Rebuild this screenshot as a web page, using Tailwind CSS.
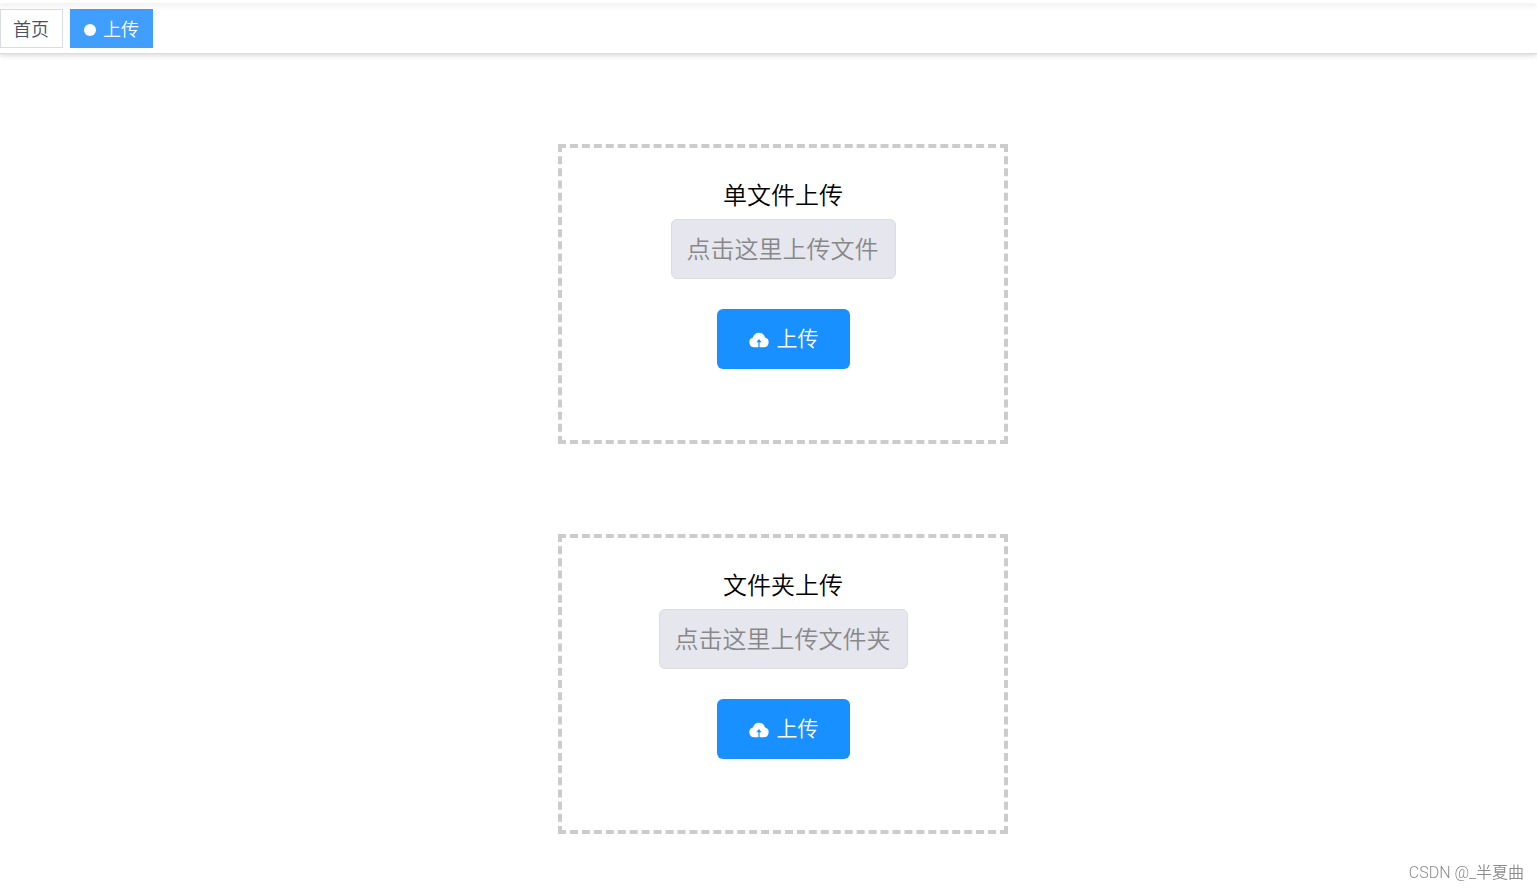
<!DOCTYPE html>
<html lang="zh-CN">
<head>
    <meta charset="UTF-8">
    <meta name="viewport" content="width=device-width, initial-scale=1.0">
    <title>上传</title>
    <script src="https://cdn.jsdelivr.net/npm/@tailwindcss/browser@4"></script>
</head>
<body class="bg-white text-black font-[350] font-['Roboto','Noto_Sans_CJK_SC',sans-serif]">
    <div class="min-h-screen flex flex-col">
        <!-- Header edge -->
        <header class="relative z-10 h-[3px] bg-white shadow-[0_2px_6px_rgba(0,0,0,0.12)]"></header>

        <!-- Tags -->
        <nav class="flex gap-[7px] h-[51px] pt-1.5 border-b border-[#d8dce5] shadow-[0_2px_5px_rgba(0,0,0,0.12),0_0_5px_rgba(0,0,0,0.04)]">
            <a href="#" class="flex items-center h-[39px] pl-3 pr-[13px] pt-0.5 border border-[#d8dce5] bg-white text-lg text-[#495060]">首页</a>
            <a href="#" class="flex items-center gap-[7px] h-[39px] pl-[13px] pr-[13px] pt-0.5 border border-[#409eff] bg-[#409eff] text-lg text-white">
                <span class="size-3 rounded-full bg-white"></span>上传
            </a>
        </nav>

        <!-- Upload boxes -->
        <main class="flex-1 flex flex-col items-center gap-[90px] pt-[90px] pb-14 pl-[29px]">
            <section class="flex flex-col items-center w-[450px] h-[300px] pt-[30px] border-4 border-dashed border-[#ccc]">
                <h2 class="text-2xl leading-9">单文件上传</h2>
                <label class="mt-[5px] h-[60px] pl-[15px] pr-4 pt-0.5 flex items-center rounded-md border border-[#dcdcdc] bg-[#e6e6ee] text-2xl text-[#888] cursor-pointer">
                    点击这里上传文件
                    <input type="file" class="hidden">
                </label>
                <button type="button" class="mt-[30px] h-[60px] pl-8 pr-[31px] pt-0.5 flex items-center gap-2 rounded-md bg-[#1890ff] text-white text-[21px]">
                    <svg class="w-5 h-5" viewBox="0 0 20 20" fill="currentColor">
                        <path fill-rule="evenodd" d="M5.2 17.2A4.9 4.9 0 0 1 3.9 7.6 6.3 6.3 0 0 1 16.1 7.6 4.9 4.9 0 0 1 14.8 17.2H10.6V12.2H12.6L10 9 7.4 12.2H9.4V17.2Z" />
                    </svg>
                    上传
                </button>
            </section>

            <section class="flex flex-col items-center w-[450px] h-[300px] pt-[30px] border-4 border-dashed border-[#ccc]">
                <h2 class="text-2xl leading-9">文件夹上传</h2>
                <label class="mt-[5px] h-[60px] pl-[15px] pr-4 pt-0.5 flex items-center rounded-md border border-[#dcdcdc] bg-[#e6e6ee] text-2xl text-[#888] cursor-pointer">
                    点击这里上传文件夹
                    <input type="file" webkitdirectory class="hidden">
                </label>
                <button type="button" class="mt-[30px] h-[60px] pl-8 pr-[31px] pt-0.5 flex items-center gap-2 rounded-md bg-[#1890ff] text-white text-[21px]">
                    <svg class="w-5 h-5" viewBox="0 0 20 20" fill="currentColor">
                        <path fill-rule="evenodd" d="M5.2 17.2A4.9 4.9 0 0 1 3.9 7.6 6.3 6.3 0 0 1 16.1 7.6 4.9 4.9 0 0 1 14.8 17.2H10.6V12.2H12.6L10 9 7.4 12.2H9.4V17.2Z" />
                    </svg>
                    上传
                </button>
            </section>
        </main>
    </div>

    <!-- Watermark -->
    <div class="fixed bottom-1 right-[13px] text-base text-[#8c8c8c]">CSDN @_半夏曲</div>
</body>
</html>
